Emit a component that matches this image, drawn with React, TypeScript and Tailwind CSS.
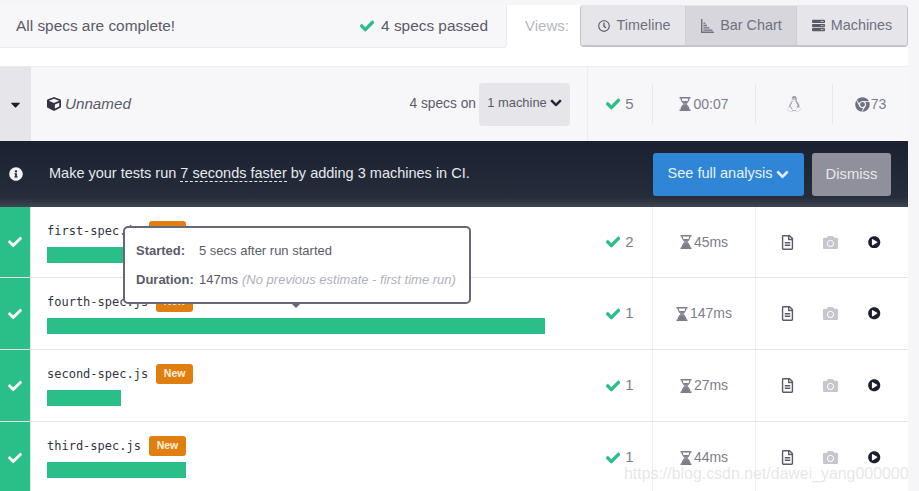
import { FaCamera, FaCaretDown, FaCheck, FaChevronDown, FaChrome, FaCube, FaInfoCircle, FaLinux, FaPlayCircle, FaRegClock, FaRegFileAlt, FaServer } from 'react-icons/fa';

const specs = [
  { name: 'first-spec.js', tests: 2, time: '45ms', bar: 'w-[165px]' },
  { name: 'fourth-spec.js', tests: 1, time: '147ms', bar: 'w-[498px]' },
  { name: 'second-spec.js', tests: 1, time: '27ms', bar: 'w-[74px]' },
  { name: 'third-spec.js', tests: 1, time: '44ms', bar: 'w-[139px]' },
];

function BarChartIcon() {
  return (
    <svg viewBox="0 0 14 14" className="h-[14px] w-[14px]" fill="currentColor">
      <path d="M1 0h1.4v12.6H14V14H1z" />
      <path d="M3.400 10.600h9v1.200h-9zM3.400 8.200h6v1.400h-6zM3.400 5.800h3.600v1.400H3.400zM3.400 3.400h2v1.400h-2z" />
    </svg>
  );
}

// wide hourglass with the sand settled at the bottom
function Hourglass() {
  return (
    <svg viewBox="0 0 12 14" className="h-[14px] w-3 shrink-0">
      <path d="M2 1c0 3 1.500 4.500 3.500 6C3.500 8.500 2 10 2 13M10 1c0 3-1.500 4.500-3.500 6 2 1.500 3.500 3 3.500 6" fill="none" stroke="currentColor" strokeWidth="1.100" />
      <path d="M6 7.500c1.800 1.200 3.500 3 3.700 5.500H2.300C2.500 10.500 4.200 8.700 6 7.500zM3.200 4h5.600L6 6.600z" fill="currentColor" />
      <path d="M0.500 0h11v1.600h-11zM0.500 12.400h11V14h-11z" fill="currentColor" />
    </svg>
  );
}

function SpecRow({ spec }: { spec: (typeof specs)[number] }) {
  return (
    <div className="flex h-[72px] border-b border-[#e3e3e8] first:h-[71px] last:border-b-0">
      <div className="flex w-[31px] shrink-0 items-center justify-center border-r border-[#d8f0e6] bg-[#2abf88] text-white">
        <FaCheck className="text-[14px]" />
      </div>
      <div className="w-[557px] shrink-0 pl-4 pt-[14px]">
        <div className="flex h-[20px] items-center gap-2">
          <span className="font-['DejaVu_Sans_Mono',monospace] text-[12px] text-[#33343f]">{spec.name}</span>
          <span className="flex h-[20px] w-[37px] items-center justify-center rounded-[3px] bg-[#e07f0f] text-[10.5px] font-bold text-[#fdf0dc]">New</span>
        </div>
        <div className={`mt-[6px] h-4 bg-[#2abf88] ${spec.bar}`} />
      </div>
      <div className="flex w-[65px] shrink-0 items-center justify-center gap-[5px] border-r border-[#f0f0f3] text-[15px] text-[#7c7d8b]">
        <FaCheck className="text-[14px] text-[#2abf88] [stroke-width:30]" />
        {spec.tests}
      </div>
      <div className="flex w-[103px] shrink-0 items-center justify-center gap-[2px] border-r border-[#f0f0f3] text-[14px] text-[#7c7d8b]">
        <Hourglass />
        {spec.time}
      </div>
      <div className="flex flex-1 items-center gap-[28px] pl-[24px]">
        <FaRegFileAlt className="text-[15px] text-[#5b5c6b]" />
        <FaCamera className="text-[15px] text-[#c6c6cf]" />
        <FaPlayCircle className="ml-[2px] text-[12.5px] text-[#1b1e2e]" />
      </div>
    </div>
  );
}

export default function App() {
  return (
    <div className="relative h-[491px] w-[919px] overflow-hidden bg-[#f6f6f8] font-['Liberation_Sans',Arial,sans-serif]">
      <div className="h-full w-[908px] bg-white">
        <div className="h-[5px] bg-[#f6f6f8]" />

        {/* Top strip with status and view switcher */}
        <div className="flex h-[61px] items-start bg-white">
          <div className="flex h-[43px] w-[507px] items-center justify-between rounded-br-[4px] border-b border-r border-[#ececf0] bg-[#f7f7f9] pl-4 pr-[18px] text-[15.4px] text-[#5a5b68]">
            <span>All specs are complete!</span>
            <span className="flex items-center gap-[7px]">
              <FaCheck className="text-[14px] text-[#2abf88] [stroke-width:30]" />
              4 specs passed
            </span>
          </div>
          <span className="ml-[18px] mt-[10px] w-[55px] text-[15px] text-[#b5b6c0]">Views:</span>
          <div className="flex h-[42px] w-[328px] overflow-hidden rounded-[4px] border-b-2 border-l border-r border-[#c4c4cc] bg-[#e6e6ea] pt-[1px] text-[14.4px] text-[#6f7080]">
            <div className="flex w-[104px] items-center justify-center gap-[7px] pl-[2px]">
              <FaRegClock className="text-[12px] text-[#5a5b68]" />
              Timeline
            </div>
            <div className="flex w-[112px] items-center justify-center gap-[6px] border-x border-[#cfcfd6] bg-[#d6d6dc]">
              <BarChartIcon />
              Bar Chart
            </div>
            <div className="flex flex-1 items-center justify-center gap-[6px]">
              <FaServer className="text-[13px] text-[#5a5b68]" />
              Machines
            </div>
          </div>
        </div>

        {/* Run group header */}
        <div className="flex h-[75px] border-t border-[#ececf0] bg-[#f7f7f9]">
          <div className="flex w-[31px] shrink-0 items-center justify-center bg-[#e6e6ea] text-[#1b1e2e]">
            <FaCaretDown className="text-[15px]" />
          </div>
          <div className="flex w-[557px] shrink-0 items-center justify-between border-r border-[#ececf0] pl-4 pr-[17px] text-[#5a5b68]">
            <span className="flex items-center gap-1 text-[15.2px] italic">
              <FaCube className="text-[14px] text-[#33343f]" />
              Unnamed
            </span>
            <span className="flex items-center gap-[3px]">
              <span className="text-[13.75px]">4 specs on</span>
              <span className="flex h-[43px] w-[91px] items-center justify-center gap-[3px] rounded-[4px] bg-[#e6e6ea] pb-[3px] text-[12.9px]">
                1 machine
                <FaChevronDown className="text-[12px] text-[#1b1e2e] [stroke-width:30]" />
              </span>
            </span>
          </div>
          <div className="flex flex-1 items-center text-[14px] text-[#7c7d8b]">
            <div className="flex h-10 w-[65px] items-center justify-center gap-[5px] border-r border-[#e8e8ec] text-[15px]">
              <FaCheck className="text-[14px] text-[#2abf88] [stroke-width:30]" />5
            </div>
            <div className="flex h-10 w-[103px] items-center justify-center gap-[2px] border-r border-[#e8e8ec]">
              <Hourglass />
              00:07
            </div>
            <div className="flex h-10 w-[77px] items-center justify-center border-r border-[#e8e8ec]">
              <FaLinux className="text-[16px] text-[#9a9aa6]" />
            </div>
            <div className="flex h-10 flex-1 items-center justify-center gap-[1px]">
              <FaChrome className="text-[15px] text-[#6f7080]" />
              73
            </div>
          </div>
        </div>

        {/* Parallelization banner */}
        <div className="flex h-[66px] items-center bg-gradient-to-b from-[#1a2130] via-[#252c3a] via-85% to-[#3f4551] text-white">
          <div className="flex w-[31px] shrink-0 items-center justify-center">
            <FaInfoCircle className="text-[14px] text-[#f2f2f4]" />
          </div>
          <p className="ml-[18px] text-[14.5px] text-[#e8e8ec]">
            Make your tests run <span className="border-b border-dashed border-[#e8e8ec]">7 seconds faster</span> by adding 3 machines in CI.
          </p>
          <button type="button" className="ml-auto flex h-[43px] w-[151px] items-center justify-center gap-1 rounded-[3px] bg-[#2f86d6] text-[14.5px] text-[#e8f2fb]">
            See full analysis
            <FaChevronDown className="text-[13px] [stroke-width:30]" />
          </button>
          <button type="button" className="ml-2 mr-[17px] h-[43px] w-[79px] rounded-[3px] bg-[#8f909b] text-[14.8px] text-[#e8e8ec]">Dismiss</button>
        </div>

        {/* Spec rows */}
        <div className="relative">
          {specs.map((spec) => (
            <SpecRow key={spec.name} spec={spec} />
          ))}
          <div className="absolute left-[123px] top-[19px] h-[78px] w-[348px] rounded-[5px] border-2 border-[#666877] bg-white px-[11px] text-[13px] text-[#5a5b68]">
            <div className="flex h-[32px] items-end">
              <b className="w-[63px]">Started:</b>
              <span>5 secs after run started</span>
            </div>
            <div className="mt-[4px] flex h-[25px] items-end whitespace-nowrap">
              <b className="w-[63px]">Duration:</b>
              <span>147ms</span>
              <em className="ml-1 text-[#b0b1bb]">(No previous estimate - first time run)</em>
            </div>
            <span className="absolute left-[165px] top-[74px] h-0 w-0 border-x-[6px] border-t-[6px] border-x-transparent border-t-[#666877]" />
          </div>
        </div>
      </div>
      <span className="absolute left-[624px] top-[462px] text-[15.9px] text-[#dcdce0]/70">https://blog.csdn.net/dawei_yang000000</span>
    </div>
  );
}
